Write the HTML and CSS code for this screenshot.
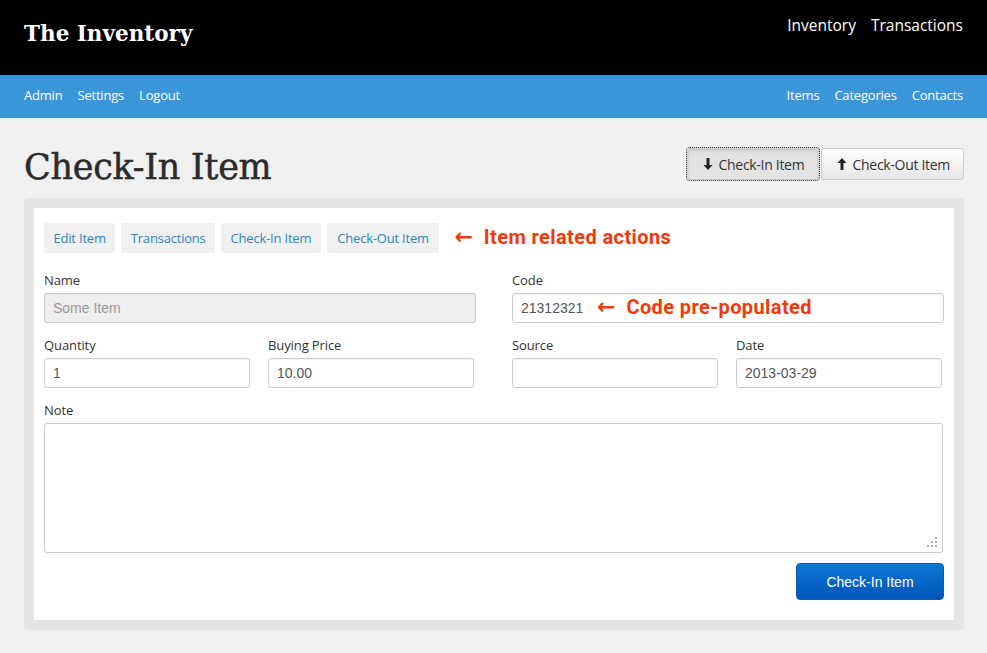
FILE: index.html
```html
<!DOCTYPE html>
<html>
<head>
<meta charset="utf-8">
<link rel="stylesheet" href="styles.css">
</head>
<body>
<header class="topbar">
  <div class="brand">The Inventory</div>
  <nav class="mainnav"><a>Inventory</a><a>Transactions</a></nav>
</header>
<div class="subbar">
  <nav class="subnav"><a>Admin</a><a>Settings</a><a>Logout</a></nav>
  <nav class="subnav"><a>Items</a><a>Categories</a><a>Contacts</a></nav>
</div>
<main class="page">
  <div class="pagehead">
    <h1 class="title">Check-In Item</h1>
    <div class="btngroup">
      <button class="btn active"><svg class="ico" viewBox="0 0 10 12" width="10" height="12"><path d="M3.5 0h3v7h3L5 12 0.5 7h3z" fill="#222"/></svg>Check-In Item</button>
      <button class="btn"><svg class="ico" viewBox="0 0 10 12" width="10" height="12"><path d="M3.5 12h3V5h3L5 0 0.5 5h3z" fill="#222"/></svg>Check-Out Item</button>
    </div>
  </div>
  <section class="panel">
    <div class="card">
      <div class="tabs">
        <a class="tab">Edit Item</a>
        <a class="tab">Transactions</a>
        <a class="tab">Check-In Item</a>
        <a class="tab">Check-Out Item</a>
        <span class="note-red"><span class="arrow">&#8592;</span>Item related actions</span>
      </div>
      <div class="grid2 row1">
        <div class="field">
          <label>Name</label>
          <input class="input disabled" placeholder="Some Item" disabled>
        </div>
        <div class="field">
          <label>Code</label>
          <div class="withnote">
            <input class="input" value="21312321">
            <span class="note-red inner"><span class="arrow">&#8592;</span>Code pre-populated</span>
          </div>
        </div>
      </div>
      <div class="grid2 row2">
        <div class="sub2">
          <div class="field"><label>Quantity</label><input class="input" value="1"></div>
          <div class="field"><label>Buying Price</label><input class="input" value="10.00"></div>
        </div>
        <div class="sub2">
          <div class="field"><label>Source</label><input class="input" value=""></div>
          <div class="field"><label>Date</label><input class="input" value="2013-03-29"></div>
        </div>
      </div>
      <div class="field notefield">
        <label>Note</label>
        <div class="tawrap">
          <textarea class="textarea"></textarea>
          <svg class="grip" width="10" height="10" viewBox="0 0 10 10"><g fill="#aaa"><rect x="8" y="0" width="2" height="2"/><rect x="4" y="4" width="2" height="2"/><rect x="8" y="4" width="2" height="2"/><rect x="0" y="8" width="2" height="2"/><rect x="4" y="8" width="2" height="2"/><rect x="8" y="8" width="2" height="2"/></g></svg>
        </div>
      </div>
      <div class="actions">
        <button class="primary">Check-In Item</button>
      </div>
    </div>
  </section>
</main>
</body>
</html>
```

FILE: styles.css
```css
* { box-sizing: border-box; }
body {
  margin: 0;
  background: #f0f0f0;
  font-family: "Open Sans", "Noto Sans", sans-serif;
  color: #333;
}
a { cursor: pointer; }
.topbar {
  background: #000;
  height: 75px;
  display: flex;
  justify-content: space-between;
  padding: 0 24px;
}
.brand {
  font-family: "DejaVu Serif", serif;
  font-weight: bold;
  font-size: 21.5px;
  color: #fff;
  padding-top: 21px;
}
.mainnav {
  display: flex;
  gap: 15px;
  padding-top: 14px;
  font-size: 15.5px;
  color: #fff;
}
.subbar {
  background: #3a96d9;
  height: 43px;
  display: flex;
  justify-content: space-between;
  align-items: center;
  padding: 0 24px 4px;
}
.subnav {
  display: flex;
  gap: 15px;
  font-size: 13px;
  color: #fff;
  letter-spacing: -0.2px;
}
.page { padding: 0 23px 0 24px; }
.pagehead {
  display: flex;
  justify-content: space-between;
  align-items: flex-start;
  height: 80px;
}
.title {
  margin: 0;
  padding-top: 29px;
  font-family: "DejaVu Serif", serif;
  font-weight: normal;
  font-size: 35px;
  color: #2b2b2b;
  letter-spacing: -0.3px;
  -webkit-text-stroke: 0.5px #2b2b2b;
}
.btngroup {
  display: flex;
  gap: 2px;
  margin-top: 30px;
}
.btn {
  height: 32px;
  display: flex;
  align-items: center;
  gap: 6px;
  padding: 0 13px 0 15px;
  font-family: "Open Sans", "Noto Sans", sans-serif;
  font-size: 14px;
  letter-spacing: -0.3px;
  color: #333;
  border: 1px solid #ccc;
  border-radius: 3px;
  background: linear-gradient(#ffffff, #e6e6e6);
}
.btn.active {
  background: #e3e3e3;
  box-shadow: inset 0 2px 3px rgba(0,0,0,0.12);
  outline: 1px dotted #222;
  outline-offset: 0;
  width: 132px;
}
.ico { display: block; }
.panel {
  background: #e4e4e4;
  border-radius: 4px;
  padding: 10px;
}
.card {
  background: #fff;
  padding: 15px 10px 20px 10px;
}
.tabs {
  display: flex;
  align-items: center;
  gap: 6px;
  height: 30px;
}
.tab {
  background: #f0f0f0;
  color: #2a87c1;
  font-size: 13px;
  letter-spacing: -0.2px;
  height: 30px;
  line-height: 30px;
  padding: 0 9.5px;
  border-radius: 2px;
}
.tab:nth-child(4) { padding: 0 10.5px; }
.note-red {
  font-family: "Roboto", sans-serif;
  font-weight: bold;
  font-size: 20px;
  letter-spacing: 0.4px;
  color: #ee3a0d;
  margin-left: 9px;
  margin-top: -4px;
  white-space: nowrap;
}
.arrow {
  font-family: "DejaVu Sans", sans-serif;
  font-weight: bold;
  font-size: 22px;
  margin-right: 11px;
  letter-spacing: 0;
}
.grid2 {
  display: grid;
  grid-template-columns: 432px 432px;
  gap: 36px;
}
.row1 { margin-top: 18px; }
.row2 { margin-top: 13px; }
.sub2 {
  display: grid;
  grid-template-columns: 206px 206px;
  gap: 18px;
}
.notefield { margin-top: 13px; }
.field { display: flex; flex-direction: column; }
label {
  font-size: 13px;
  color: #333;
  height: 22px;
  letter-spacing: -0.1px;
}
.input {
  height: 30px;
  width: 100%;
  border: 1px solid #ccc;
  border-radius: 3px;
  padding: 0 8px;
  font-family: "Liberation Sans", Arial, sans-serif;
  font-size: 14px;
  color: #555;
  background: #fff;
  box-shadow: inset 0 1px 1px rgba(0,0,0,0.06);
}
.input.disabled { background: #eee; }
.input::placeholder { color: #999; }
.withnote { position: relative; }
.note-red.inner {
  position: absolute;
  left: 85px;
  top: 1px;
  margin: 0;
}
.tawrap { position: relative; width: 899px; }
.textarea {
  height: 130px;
  width: 899px;
  border: 1px solid #ccc;
  border-radius: 3px;
  resize: none;
  display: block;
}
.grip {
  position: absolute;
  right: 6px;
  bottom: 6px;
}
.actions {
  display: flex;
  justify-content: flex-end;
  margin-top: 10px;
}
.primary {
  width: 148px;
  height: 37px;
  border: 1px solid #0a5bb5;
  border-radius: 4px;
  background: linear-gradient(#0a78d2, #0154bb);
  color: #fff;
  font-family: "Liberation Sans", Arial, sans-serif;
  font-size: 14px;
}
```
